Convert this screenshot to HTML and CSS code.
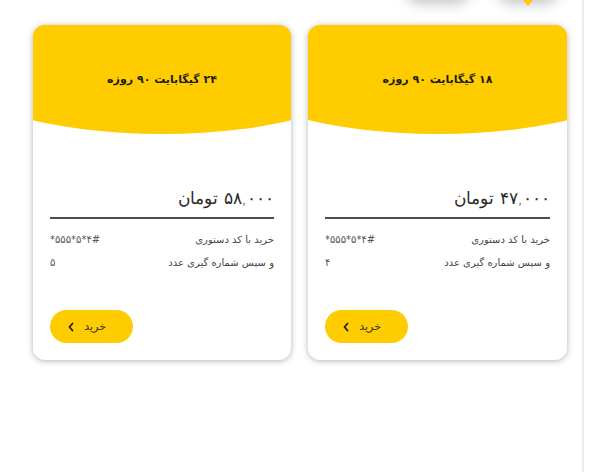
FILE: index.html
```html
<!DOCTYPE html>
<html lang="fa">
<head>
<meta charset="utf-8">
<title>بسته‌های اینترنت</title>
<link rel="stylesheet" href="styles.css">
</head>
<body>
<div class="page">
  <div class="topbar" aria-hidden="true">
    <span class="tab tab-a"></span>
    <span class="tab tab-b"></span>
    <span class="pointer"></span>
  </div>
  <main class="content" dir="rtl">
    <div class="cards">
      <article class="card">
        <header class="card-head"><h2 class="title">۱۸ گیگابایت ۹۰ روزه</h2></header>
        <div class="card-body">
          <div class="price">۴۷,۰۰۰ تومان</div>
          <div class="row"><span>خرید با کد دستوری</span><bdo class="code" dir="ltr">*۵۵۵*۵*۴#</bdo></div>
          <div class="row"><span>و سپس شماره گیری عدد</span><span class="code">۴</span></div>
          <button class="buy"><span>خرید</span><svg class="chev" viewBox="0 0 8 10" width="8" height="10"><path d="M5.5 1.5 2.5 5l3 3.5" fill="none" stroke="#222" stroke-width="1.8" stroke-linecap="round" stroke-linejoin="round"/></svg></button>
        </div>
      </article>
      <article class="card">
        <header class="card-head"><h2 class="title">۲۴ گیگابایت ۹۰ روزه</h2></header>
        <div class="card-body">
          <div class="price">۵۸,۰۰۰ تومان</div>
          <div class="row"><span>خرید با کد دستوری</span><bdo class="code" dir="ltr">*۵۵۵*۵*۴#</bdo></div>
          <div class="row"><span>و سپس شماره گیری عدد</span><span class="code">۵</span></div>
          <button class="buy"><span>خرید</span><svg class="chev" viewBox="0 0 8 10" width="8" height="10"><path d="M5.5 1.5 2.5 5l3 3.5" fill="none" stroke="#222" stroke-width="1.8" stroke-linecap="round" stroke-linejoin="round"/></svg></button>
        </div>
      </article>
    </div>
  </main>
  <aside class="side"></aside>
</div>
</body>
</html>
```

FILE: styles.css
```css
* { box-sizing: border-box; }
html, body { margin: 0; padding: 0; background: #fff; }
body {
  font-family: "DejaVu Sans", "Noto Sans", sans-serif;
  color: #333;
  width: 600px;
  height: 472px;
  overflow: hidden;
}
.page {
  position: relative;
  display: flex;
  flex-direction: row;
  height: 472px;
}
.side {
  width: 18px;
  border-left: 2px solid #ebebeb;
  background: #fff;
}
.content {
  width: 582px;
  padding: 25px 15px 0 33px;
}
.cards {
  display: flex;
  flex-direction: row;
  gap: 17px;
}
.card {
  width: 259px;
  height: 335px;
  border-radius: 12px;
  background: #fff;
  overflow: hidden;
  box-shadow: 0 1px 6px rgba(0,0,0,0.3);
  display: flex;
  flex-direction: column;
}
.card + .card { width: 258px; }
.card-head {
  position: relative;
  height: 94px;
  background: #ffcc00;
  padding-top: 46px;
  text-align: center;
}
.card-head::after {
  content: "";
  position: absolute;
  left: 50%;
  margin-left: -210px;
  width: 420px;
  height: 130px;
  bottom: -15px;
  border-radius: 50%;
  background: #ffcc00;
}
.title {
  position: relative;
  z-index: 1;
  margin: 0;
  font-size: 11px;
  line-height: 18px;
  font-weight: bold;
  color: #1a1a1a;
}
.card-body {
  display: flex;
  flex-direction: column;
  padding: 0 17px;
}
.price {
  margin-top: 67px;
  font-size: 17px;
  line-height: 24px;
  font-weight: 300;
  color: #2a2a2a;
  padding-bottom: 7px;
  border-bottom: 2px solid #4d4d4d;
}
.row {
  display: flex;
  justify-content: space-between;
  font-size: 10px;
  line-height: 20px;
  color: #444;
}
.price + .row { margin-top: 11px; }
.row + .row { margin-top: 3px; }
.code { color: #555; }
.buy {
  align-self: flex-end;
  margin-top: 37px;
  width: 83px;
  height: 33px;
  border: none;
  border-radius: 17px;
  background: #ffcc00;
  display: flex;
  align-items: center;
  justify-content: space-between;
  padding: 0 27px 0 17px;
  font-family: inherit;
  font-size: 11px;
  color: #333;
}
.chev { display: block; }
.topbar {
  position: absolute;
  top: 0;
  left: 400px;
  width: 170px;
  height: 10px;
}
.tab {
  position: absolute;
  top: -30px;
  height: 30px;
  background: #fff;
  border-radius: 14px;
  box-shadow: 0 3px 14px rgba(0,0,0,0.25);
}
.tab-a { left: 6px; width: 64px; }
.tab-b { left: 97px; width: 62px; }
.pointer {
  position: absolute;
  top: 0;
  left: 123px;
  width: 0;
  height: 0;
  border-left: 5px solid transparent;
  border-right: 5px solid transparent;
  border-top: 6px solid #ffcc00;
}
```
